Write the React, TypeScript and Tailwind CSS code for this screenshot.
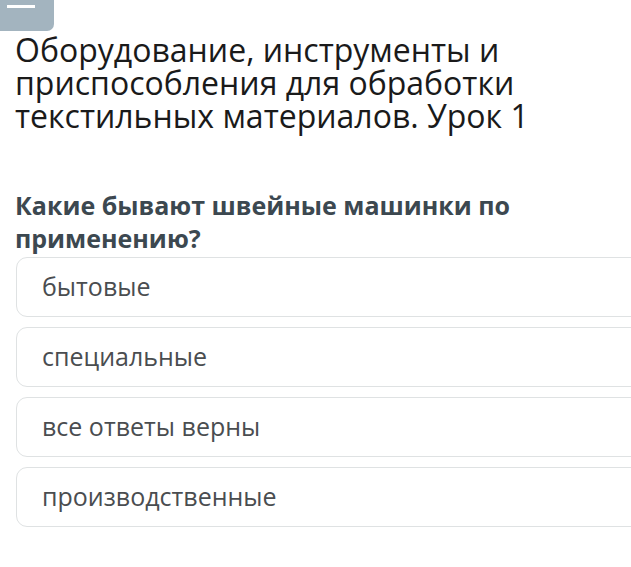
const options = ["бытовые", "специальные", "все ответы верны", "производственные"];

export default function App() {
  return (
    <div className="w-[631px] h-[567px] bg-white overflow-hidden font-['Open_Sans',sans-serif]">
      {/* Collapsed tab */}
      <div className="w-[54px] h-[31px] bg-[#a3b4bf] rounded-br-[7px] pt-[5px] pl-[7px]">
        <div className="w-[28px] h-[3px] bg-white" />
      </div>

      <div className="pl-[15px] pt-[2px]">
        <h1 className="text-[32px] leading-[33px] text-[#1a1a1a] font-normal">
          Оборудование, инструменты и
          <br />
          приспособления для обработки
          <br />
          текстильных материалов. Урок 1
        </h1>

        <p className="mt-[57px] text-[25px] leading-[33px] font-bold text-[#3c4850]">
          Какие бывают швейные машинки по
          <br />
          применению?
        </p>
      </div>

      <div className="flex flex-col gap-[10px] pl-[16px] mt-[2px] -mr-[20px]">
        {options.map((o) => (
          <div
            key={o}
            className="h-[60px] flex items-center pl-[25px] border border-[#dfe2e3] rounded-[11px] bg-white text-[25px] text-[#4a4d50]"
          >
            {o}
          </div>
        ))}
      </div>
    </div>
  );
}
